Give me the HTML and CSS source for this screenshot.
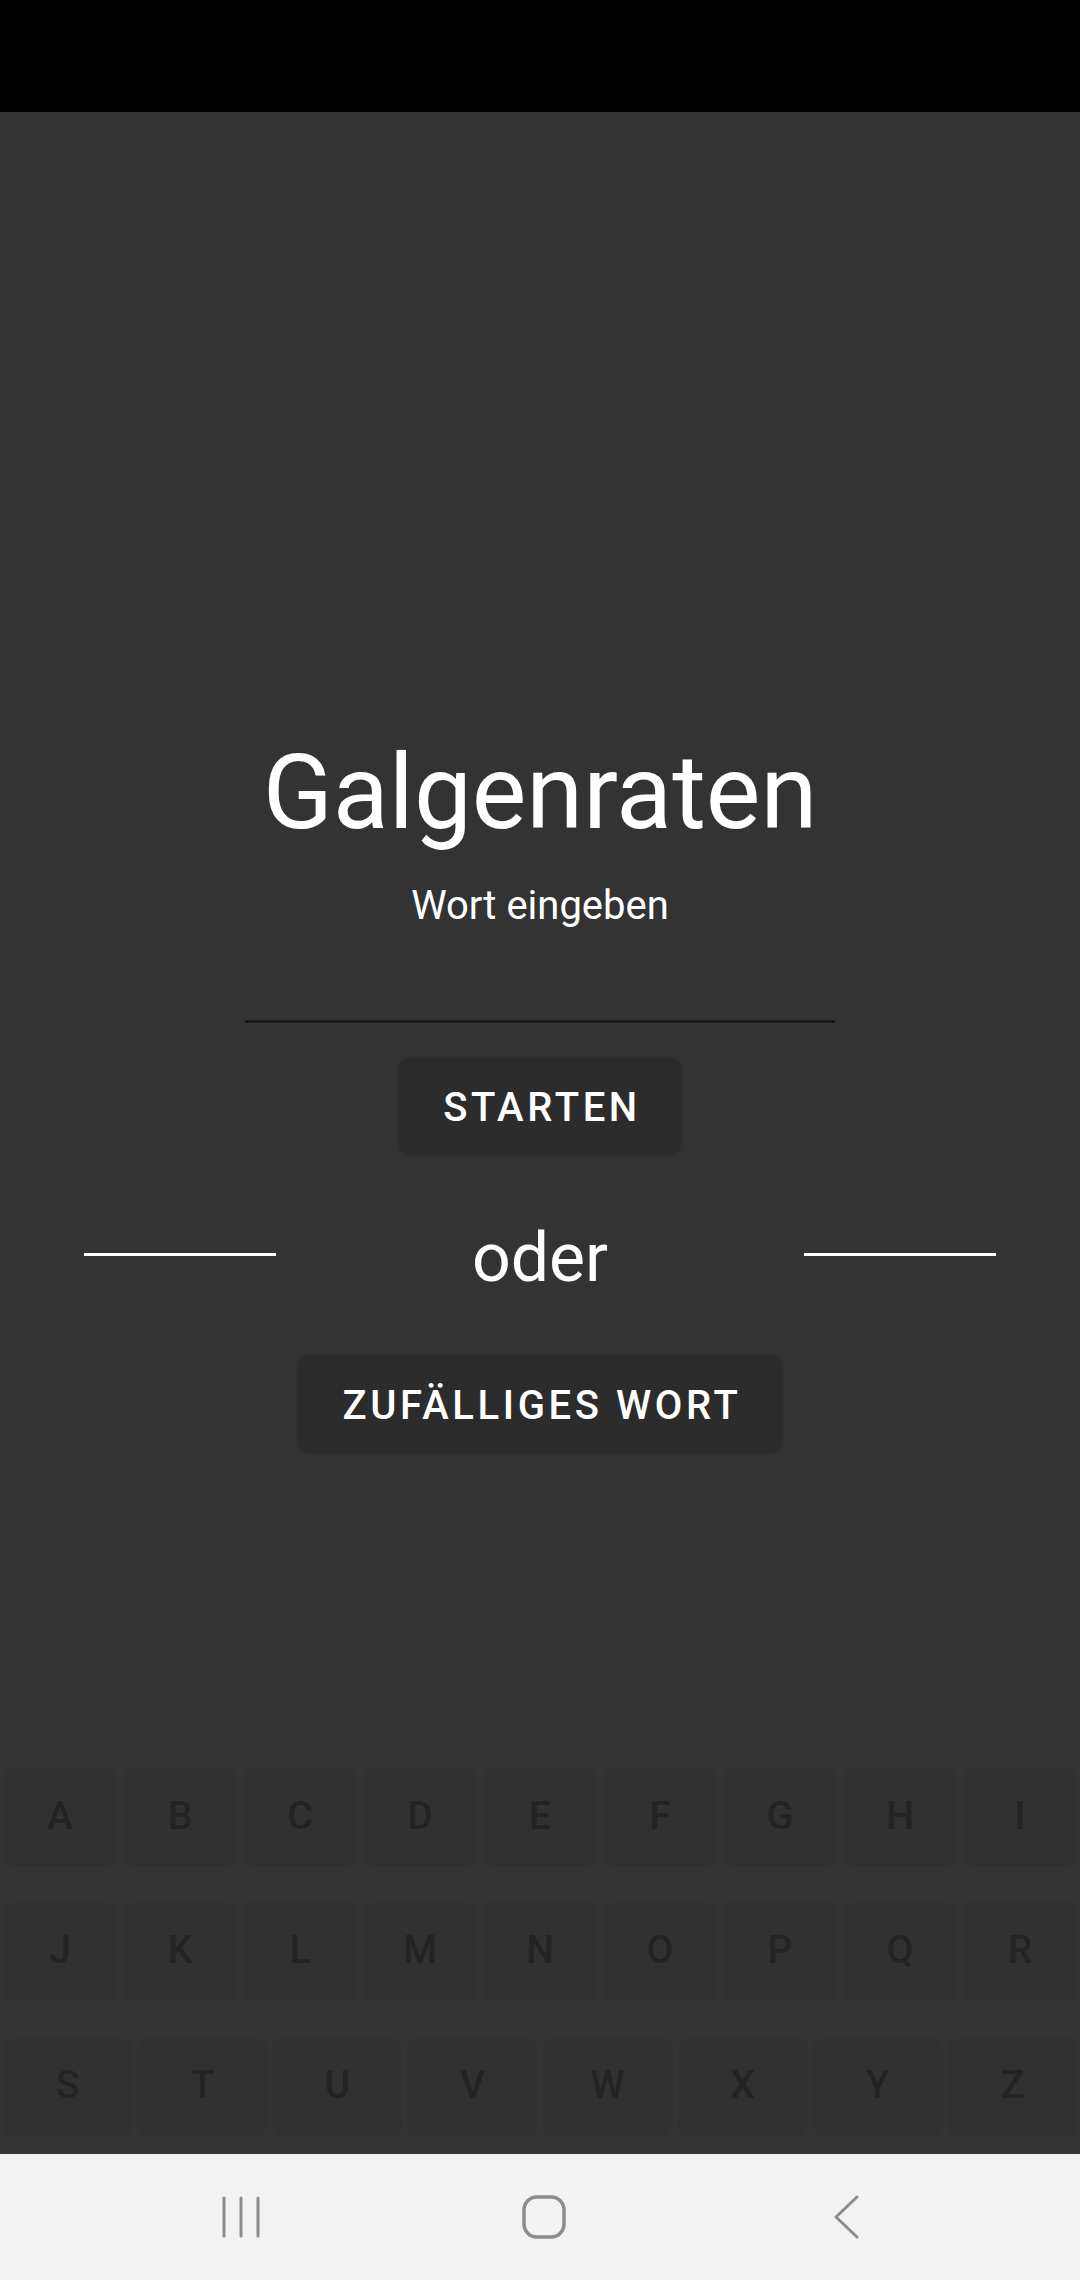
FILE: index.html
```html
<!DOCTYPE html>
<html lang="de">
<head>
<meta charset="utf-8">
<title>Galgenraten</title>
<link rel="stylesheet" href="styles.css">
</head>
<body>
<div class="screen">
  <div class="statusbar"></div>
  <main class="app">
    <section class="start">
      <h1 class="title">Galgenraten</h1>
      <p class="hint">Wort eingeben</p>
      <div class="word-input"></div>
      <button class="btn btn-start">Starten</button>
      <div class="divider">
        <span class="divider-line"></span>
        <span class="divider-text">oder</span>
        <span class="divider-line"></span>
      </div>
      <button class="btn btn-random">Zufälliges Wort</button>
    </section>
    <section class="keyboard">
      <div class="key-row row-9">
        <div class="key">A</div><div class="key">B</div><div class="key">C</div><div class="key">D</div><div class="key">E</div><div class="key">F</div><div class="key">G</div><div class="key">H</div><div class="key">I</div>
      </div>
      <div class="key-row row-9">
        <div class="key">J</div><div class="key">K</div><div class="key">L</div><div class="key">M</div><div class="key">N</div><div class="key">O</div><div class="key">P</div><div class="key">Q</div><div class="key">R</div>
      </div>
      <div class="key-row row-8">
        <div class="key">S</div><div class="key">T</div><div class="key">U</div><div class="key">V</div><div class="key">W</div><div class="key">X</div><div class="key">Y</div><div class="key">Z</div>
      </div>
    </section>
  </main>
  <nav class="navbar">
    <svg class="nav-recents" width="40" height="44" viewBox="0 0 40 44"><g stroke="#8c8c8c" stroke-width="3" stroke-linecap="round" fill="none"><line x1="3" y1="3" x2="3" y2="41"/><line x1="20" y1="3" x2="20" y2="41"/><line x1="37" y1="3" x2="37" y2="41"/></g></svg>
    <svg class="nav-home" width="46" height="46" viewBox="0 0 46 46"><rect x="3" y="3" width="40" height="40" rx="13" ry="13" stroke="#8c8c8c" stroke-width="3.5" fill="none"/></svg>
    <svg class="nav-back" width="28" height="44" viewBox="0 0 28 44"><polyline points="25,2 4,22 25,42" stroke="#8c8c8c" stroke-width="3" stroke-linecap="round" stroke-linejoin="round" fill="none"/></svg>
  </nav>
</div>
</body>
</html>
```

FILE: styles.css
```css
* { box-sizing: border-box; }

html, body {
  margin: 0;
  padding: 0;
  background: #333333;
}

body {
  font-family: Roboto, "Noto Sans", "Liberation Sans", sans-serif;
  color: #ffffff;
}

.screen {
  width: 1080px;
  height: 2280px;
  display: flex;
  flex-direction: column;
  overflow: hidden;
}

.statusbar {
  height: 112px;
  background: #000000;
  flex: none;
}

.app {
  flex: 1;
  display: flex;
  flex-direction: column;
  background: #333333;
}

.start {
  display: flex;
  flex-direction: column;
  align-items: center;
  padding-top: 629px;
}

.title {
  margin: 0;
  font-size: 103px;
  font-weight: 400;
  line-height: 1;
}

.hint {
  margin: 42px 0 0;
  font-size: 40px;
  line-height: 1;
  font-weight: 400;
}

.word-input {
  width: 590px;
  height: 97px;
  border-bottom: 3px solid #1a1a1a;
}

.btn {
  font-family: Roboto, "Noto Sans", "Liberation Sans", sans-serif;
  font-weight: 500;
  font-size: 40px;
  letter-spacing: 3.6px;
  text-transform: uppercase;
  color: #ffffff;
  background: #2c2c2c;
  border: none;
  border-radius: 12px;
  height: 96px;
  padding: 5px 0 0 4px;
  display: flex;
  align-items: center;
  justify-content: center;
  box-shadow: 0 2px 4px rgba(0, 0, 0, 0.22);
}

.btn-start {
  margin-top: 34px;
  width: 282px;
}

.btn-random {
  margin-top: 63px;
  width: 484px;
}

.divider {
  margin-top: 71px;
  width: 912px;
  display: flex;
  justify-content: space-between;
  align-items: flex-start;
}

.divider-line {
  width: 192px;
  height: 3px;
  margin-top: 29px;
  background: #ffffff;
}

.divider-text {
  font-size: 68px;
  line-height: 1;
  font-weight: 400;
}

.keyboard {
  margin-top: auto;
  display: flex;
  flex-direction: column;
}

.key-row {
  display: grid;
  height: 134px;
  align-items: center;
}

.row-9 {
  grid-template-columns: repeat(9, 120px);
}

.row-8 {
  height: 137px;
  grid-template-columns: repeat(8, 135px);
}

.key {
  height: 96px;
  margin: 0 4px;
  border-radius: 10px;
  background: #313131;
  box-shadow: 0 1px 2px rgba(0, 0, 0, 0.12);
  display: flex;
  align-items: center;
  justify-content: center;
  color: #232323;
  font-size: 39px;
  font-weight: 500;
  line-height: 1;
}

.navbar {
  height: 126px;
  flex: none;
  background: #f2f2f2;
  display: flex;
  align-items: center;
  padding-left: 221px;
  gap: 260px;
}

.nav-home {
  margin-right: 5px;
}
```
